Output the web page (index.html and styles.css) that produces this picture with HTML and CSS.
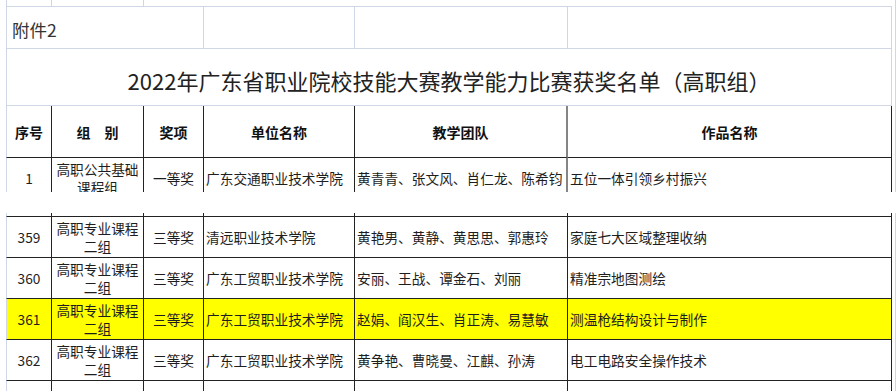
FILE: index.html
```html
<!DOCTYPE html>
<html lang="zh-CN">
<head>
    <meta charset="UTF-8">
    <title>2022年广东省职业院校技能大赛教学能力比赛获奖名单（高职组）</title>
    <link rel="stylesheet" href="styles.css">
</head>
<body>
    <div class="sheet">
        <!-- 上半部分：标题与表头 -->
        <div class="block block-top">
            <div class="cell first light strip"></div>
            <div class="cell light strip"></div>
            <div class="cell light strip span4 no-right"></div>

            <div class="cell first light span3 note">附件2</div>
            <div class="cell light"></div>
            <div class="cell light"></div>
            <div class="cell light"></div>

            <div class="cell first light span6 title">2022年广东省职业院校技能大赛教学能力比赛获奖名单（高职组）</div>

            <div class="cell first head">序号</div>
            <div class="cell head">组　别</div>
            <div class="cell head">奖项</div>
            <div class="cell head">单位名称</div>
            <div class="cell head gray">教学团队</div>
            <div class="cell head">作品名称</div>

            <div class="cell first">1</div>
            <div class="cell">高职公共基础课程组</div>
            <div class="cell">一等奖</div>
            <div class="cell left">广东交通职业技术学院</div>
            <div class="cell left gray">黄青青、张文风、肖仁龙、陈希钧</div>
            <div class="cell left">五位一体引领乡村振兴</div>
        </div>

        <!-- 下半部分：第359-362名 -->
        <div class="block block-bottom">
            <div class="cell first"></div>
            <div class="cell"></div>
            <div class="cell"></div>
            <div class="cell"></div>
            <div class="cell"></div>
            <div class="cell"></div>

            <div class="cell first">359</div>
            <div class="cell">高职专业课程二组</div>
            <div class="cell">三等奖</div>
            <div class="cell left">清远职业技术学院</div>
            <div class="cell left">黄艳男、黄静、黄思思、郭惠玲</div>
            <div class="cell left">家庭七大区域整理收纳</div>

            <div class="cell first">360</div>
            <div class="cell">高职专业课程二组</div>
            <div class="cell">三等奖</div>
            <div class="cell left">广东工贸职业技术学院</div>
            <div class="cell left">安丽、王战、谭金石、刘丽</div>
            <div class="cell left">精准宗地图测绘</div>

            <div class="cell first mark">361</div>
            <div class="cell mark">高职专业课程二组</div>
            <div class="cell mark">三等奖</div>
            <div class="cell left mark">广东工贸职业技术学院</div>
            <div class="cell left mark">赵娟、阎汉生、肖正涛、易慧敏</div>
            <div class="cell left mark">测温枪结构设计与制作</div>

            <div class="cell first">362</div>
            <div class="cell">高职专业课程二组</div>
            <div class="cell">三等奖</div>
            <div class="cell left">广东工贸职业技术学院</div>
            <div class="cell left">黄争艳、曹晓曼、江麒、孙涛</div>
            <div class="cell left">电工电路安全操作技术</div>

            <div class="cell first"></div>
            <div class="cell"></div>
            <div class="cell"></div>
            <div class="cell"></div>
            <div class="cell"></div>
            <div class="cell"></div>
        </div>
    </div>
</body>
</html>
```

FILE: styles.css
```css
body {
    margin: 0;
    background-color: #fff;
    font-family: "Noto Sans CJK SC", "Liberation Sans", sans-serif;
    color: #1e1e1e;
    overflow: hidden;
}
.sheet {
    width: 896px;
    height: 391px;
    overflow: hidden;
}
.block {
    display: grid;
    grid-template-columns: 46px 92px 60px 151px 213px 324px;
    box-sizing: border-box;
    width: 896px;
    padding-left: 6px;
    padding-right: 3px;
    border-right: 1px solid #cfd6e6;
    overflow: hidden;
}
.block-top {
    grid-template-rows: 7px 42px 57px 52px 41px;
    height: 192px;
}
.block-bottom {
    grid-template-rows: 4px 41px 41px 41px 41px 41px;
    height: 178px;
    margin-top: 21px;
}
.cell {
    box-sizing: border-box;
    border-right: 1px solid #222;
    border-bottom: 1px solid #222;
    display: flex;
    align-items: center;
    justify-content: center;
    text-align: center;
    font-size: 13.7px;
    line-height: 18px;
    overflow: hidden;
}
.cell.first {
    border-left: 1px solid #cfd6e6;
}
.cell.left {
    justify-content: flex-start;
    text-align: left;
    padding-left: 2px;
    white-space: nowrap;
}
.cell.light {
    border-right-color: #cfd6e6;
    border-bottom-color: #cfd6e6;
}
.cell.no-right {
    border-right: none;
}
.cell.gray {
    border-right: 2px solid #858585;
}
.span3 {
    grid-column: span 3;
}
.span4 {
    grid-column: span 4;
}
.span6 {
    grid-column: span 6;
}
.note {
    justify-content: flex-start;
    padding: 5px 0 0 5px;
    font-size: 17.5px;
    color: #333;
}
.title {
    padding-top: 6px;
    font-size: 22px;
    line-height: 30px;
    color: #222;
    border-bottom-color: #555;
}
.head {
    font-size: 14px;
    font-weight: bold;
    color: #111;
}
.mark {
    background-color: #ffff00;
}
```
